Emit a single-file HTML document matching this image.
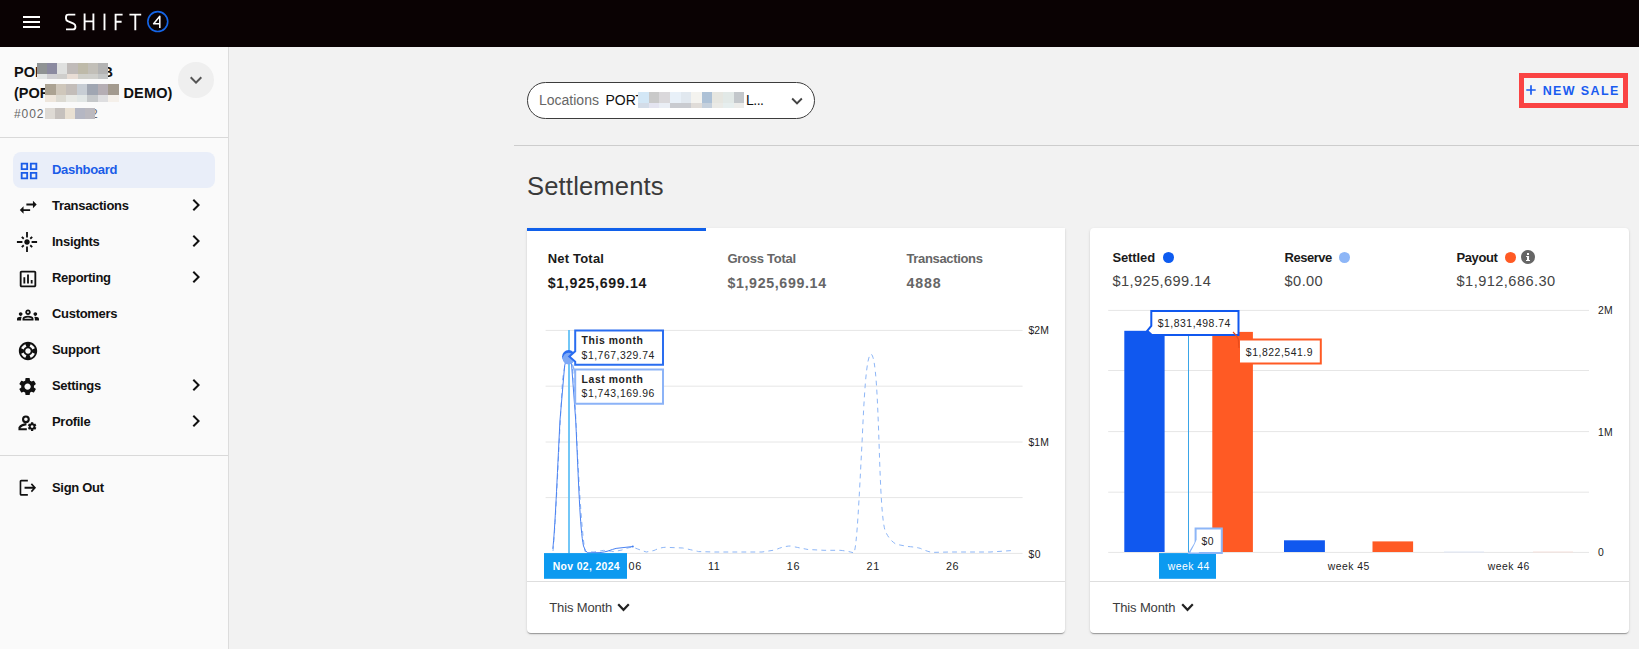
<!DOCTYPE html>
<html>
<head>
<meta charset="utf-8">
<title>Shift4 Dashboard</title>
<style>
*{box-sizing:border-box;margin:0;padding:0}
html,body{width:1639px;height:649px;overflow:hidden;background:#f2f2f2;font-family:"Liberation Sans",sans-serif;color:#1a1a1a}
.abs{position:absolute}
#top{position:absolute;left:0;top:0;width:1639px;height:47px;background:#0a0203}
#side{position:absolute;left:0;top:47px;width:229px;height:602px;background:#fafafa;border-right:1px solid #dcdcdc}
.t{position:absolute;white-space:nowrap;line-height:1}
.nav{position:absolute;left:52px;font-weight:bold;font-size:13px;letter-spacing:-0.3px;color:#111;white-space:nowrap;line-height:1}
.hr{position:absolute;height:1px;background:#d9d9d9}
.card{position:absolute;background:#fff;border-radius:4px;box-shadow:0 2px 1px -1px rgba(0,0,0,.2),0 1px 1px 0 rgba(0,0,0,.14),0 1px 3px 0 rgba(0,0,0,.12)}
svg{position:absolute;overflow:visible}
.px{position:absolute}
</style>
</head>
<body>
<!-- TOP BAR -->
<div id="top">
  <div class="abs" style="left:23px;top:16px;width:17px;height:2px;background:#fff"></div>
  <div class="abs" style="left:23px;top:21px;width:17px;height:2px;background:#fff"></div>
  <div class="abs" style="left:23px;top:26px;width:17px;height:2px;background:#fff"></div>
  <svg id="logo" style="left:0;top:0" width="200" height="47" viewBox="0 0 200 47" fill="none" stroke="#fff" stroke-width="1.9">
    <path d="M75.3 14.6 H68.5 Q66 14.6 66 17 V18.6 Q66 20.4 67.8 21.2 L73.6 23.6 Q75.4 24.4 75.4 26.2 V27 Q75.4 29.4 73 29.4 H66"/>
    <path d="M84.6 13.6 V30.2 M93.4 13.6 V30.2 M84.6 21.4 H93.4"/>
    <path d="M104.5 13.6 V30.2"/>
    <path d="M115.6 30.2 V14.6 H122.6 M115.6 21.8 H121.6"/>
    <path d="M129.4 14.6 H141.2 M135.3 14.6 V30.2"/>
    <circle cx="157.800" cy="21.600" r="9.950" stroke="#1565e6" stroke-width="1.600"/>
    <path d="M159.8 28 V16.2 L153.6 23.7 H159.8" stroke-width="1.5" stroke-linejoin="round"/>
  </svg>
</div>

<!-- SIDEBAR -->
<div id="side">
  <!-- account -->
  <div class="t" style="left:14px;top:18px;font-size:14.5px;font-weight:bold;color:#111">POR</div>
  <div class="t" style="left:102.500px;top:18px;font-size:14.5px;font-weight:bold;color:#111">B</div>
  <div class="t" style="left:14px;top:39px;font-size:14.5px;font-weight:bold;color:#111">(POR</div>
  <div class="t" style="left:123.500px;top:39px;font-size:14.5px;font-weight:bold;color:#111;letter-spacing:0.150px">DEMO)</div>
  <div class="t" style="left:14px;top:61px;font-size:12px;color:#666;letter-spacing:0.900px">#002</div>
  <div class="t" style="left:91px;top:61px;font-size:12px;color:#666">2</div>
  <!-- pixelation blocks -->
  <div id="pix1"><div class="px" style="left:37.00px;top:16px;width:10.44px;height:11px;background:#8f9394"></div><div class="px" style="left:37.00px;top:27px;width:10.44px;height:5px;background:#e2e5e5"></div><div class="px" style="left:47.14px;top:16px;width:10.44px;height:11px;background:#8b8aa0"></div><div class="px" style="left:47.14px;top:27px;width:10.44px;height:5px;background:#d0cfd2"></div><div class="px" style="left:57.29px;top:16px;width:10.44px;height:11px;background:#dfe0df"></div><div class="px" style="left:57.29px;top:27px;width:10.44px;height:5px;background:#cfcecc"></div><div class="px" style="left:67.43px;top:16px;width:10.44px;height:11px;background:#c0bbb9"></div><div class="px" style="left:67.43px;top:27px;width:10.44px;height:5px;background:#e8ddd5"></div><div class="px" style="left:77.57px;top:16px;width:10.44px;height:11px;background:#bebaa9"></div><div class="px" style="left:77.57px;top:27px;width:10.44px;height:5px;background:#cfcfc9"></div><div class="px" style="left:87.71px;top:16px;width:10.44px;height:11px;background:#c2bfb8"></div><div class="px" style="left:87.71px;top:27px;width:10.44px;height:5px;background:#cfcfcb"></div><div class="px" style="left:97.86px;top:16px;width:10.44px;height:11px;background:#b3b3b3"></div><div class="px" style="left:97.86px;top:27px;width:10.44px;height:5px;background:#c3c5c5"></div><div class="px" style="left:45.00px;top:37px;width:10.87px;height:11px;background:#aca393"></div><div class="px" style="left:45.00px;top:48px;width:10.87px;height:6.600000000000001px;background:#eee6dc"></div><div class="px" style="left:55.57px;top:37px;width:10.87px;height:11px;background:#cfc7bb"></div><div class="px" style="left:55.57px;top:48px;width:10.87px;height:6.600000000000001px;background:#dcdad2"></div><div class="px" style="left:66.14px;top:37px;width:10.87px;height:11px;background:#c3bdb9"></div><div class="px" style="left:66.14px;top:48px;width:10.87px;height:6.600000000000001px;background:#e8e9e5"></div><div class="px" style="left:76.71px;top:37px;width:10.87px;height:11px;background:#c7cdd4"></div><div class="px" style="left:76.71px;top:48px;width:10.87px;height:6.600000000000001px;background:#e1e6e5"></div><div class="px" style="left:87.29px;top:37px;width:10.87px;height:11px;background:#a0a6b2"></div><div class="px" style="left:87.29px;top:48px;width:10.87px;height:6.600000000000001px;background:#c5c8ca"></div><div class="px" style="left:97.86px;top:37px;width:10.87px;height:11px;background:#b5aeb4"></div><div class="px" style="left:97.86px;top:48px;width:10.87px;height:6.600000000000001px;background:#dedee0"></div><div class="px" style="left:108.43px;top:37px;width:10.87px;height:11px;background:#a39a8e"></div><div class="px" style="left:108.43px;top:48px;width:10.87px;height:6.600000000000001px;background:#f5f0ea"></div><div class="px" style="left:45.00px;top:61px;width:10.30px;height:11px;background:#dedad4"></div><div class="px" style="left:55.00px;top:61px;width:10.30px;height:11px;background:#c6c1bd"></div><div class="px" style="left:65.00px;top:61px;width:10.30px;height:11px;background:#e9e0d2"></div><div class="px" style="left:75.00px;top:61px;width:10.30px;height:11px;background:#b5b7c3"></div><div class="px" style="left:85.00px;top:61px;width:10.30px;height:11px;background:#bbb9bf"></div></div>
  <div class="abs" style="left:178px;top:15px;width:36px;height:36px;border-radius:50%;background:#efefef"></div>
  <svg style="left:184px;top:20.500px" width="24" height="24" viewBox="0 0 24 24"><path fill="#555" d="M16.59 8.59L12 13.17 7.41 8.59 6 10l6 6 6-6z"/></svg>
  <div class="hr" style="left:0;top:90px;width:228px"></div>
  <!-- nav -->
  <div class="abs" style="left:13px;top:105px;width:202px;height:36px;border-radius:8px;background:#e9eef9"></div>
  <svg style="left:17.6px;top:113px" width="22" height="22" viewBox="0 0 24 24"><path fill="#1a5ce8" d="M3 3v8h8V3H3zm6 6H5V5h4v4zm-6 4v8h8v-8H3zm6 6H5v-4h4v4zm4-16v8h8V3h-8zm6 6h-4V5h4v4zm-6 4v8h8v-8h-8zm6 6h-4v-4h4v4z"/></svg>
  <div class="nav" style="top:116px;color:#1a5ce8">Dashboard</div>

  <svg style="left:16.6px;top:148.600px" width="22.5" height="22.5" viewBox="0 0 24 24"><path fill="#111" d="M6.99 11L3 15l3.99 4v-3H14v-2H6.99v-3zM21 9l-3.99-4v3H10v2h7.01v3L21 9z"/></svg>
  <div class="nav" style="top:152px">Transactions</div>
  <svg class="chev" style="left:184px;top:146px" width="24" height="24" viewBox="0 0 24 24"><path fill="#111" d="M10 6L8.59 7.41 13.17 12l-4.58 4.59L10 18l6-6z"/></svg>

  <svg style="left:16px;top:184px" width="22" height="22" viewBox="0 0 24 24"><path fill="#111" d="M7 11H1v2h6v-2zm2.17-3.24L7.05 5.64 5.64 7.05l2.12 2.12 1.41-1.41zM13 1h-2v6h2V1zm5.36 6.050l-1.41-1.41-2.12 2.12 1.41 1.41 2.12-2.12zM17 11v2h6v-2h-6zm-5-2c-1.66 0-3 1.34-3 3s1.34 3 3 3 3-1.34 3-3-1.34-3-3-3zm2.83 7.24l2.12 2.12 1.41-1.41-2.12-2.12-1.41 1.41zm-9.19.71l1.41 1.41 2.12-2.120-1.41-1.41-2.12 2.12zM11 23h2v-6h-2v6z"/></svg>
  <div class="nav" style="top:188px">Insights</div>
  <svg class="chev" style="left:184px;top:182px" width="24" height="24" viewBox="0 0 24 24"><path fill="#111" d="M10 6L8.59 7.41 13.17 12l-4.58 4.59L10 18l6-6z"/></svg>

  <svg style="left:17px;top:221px" width="22" height="22" viewBox="0 0 24 24"><path fill="#111" d="M9 17H7v-7h2v7zm4 0h-2V7h2v10zm4 0h-2v-4h2v4zm2 2H5V5h14v14zm0-16H5c-1.1 0-2 .9-2 2v14c0 1.1.9 2 2 2h14c1.1 0 2-.9 2-2V5c0-1.1-.9-2-2-2z"/></svg>
  <div class="nav" style="top:224px">Reporting</div>
  <svg class="chev" style="left:184px;top:218px" width="24" height="24" viewBox="0 0 24 24"><path fill="#111" d="M10 6L8.59 7.41 13.17 12l-4.580 4.59L10 18l6-6z"/></svg>

  <svg style="left:17px;top:257px" width="22" height="22" viewBox="0 0 24 24"><path fill="#111" d="M4 13c1.1 0 2-.9 2-2s-.9-2-2-2-2 .9-2 2 .9 2 2 2zm1.13 1.1c-.37-.06-.74-.1-1.13-.1-.99 0-1.93.21-2.78.58C.48 14.9 0 15.62 0 16.43V18h4.5v-1.61c0-.83.23-1.61.63-2.29zM20 13c1.1 0 2-.9 2-2s-.9-2-2-2-2 .9-2 2 .9 2 2 2zm4 3.43c0-.81-.48-1.53-1.22-1.85-.85-.37-1.79-.58-2.78-.58-.39 0-.76.04-1.13.1.4.68.63 1.46.63 2.29V18H24v-1.57zm-7.76-2.78c-1.17-.52-2.61-.9-4.24-.9-1.63 0-3.07.39-4.24.9C6.68 14.13 6 15.21 6 16.39V18h12v-1.61c0-1.18-.68-2.26-1.76-2.74zM8.070 16c.09-.23.13-.39.91-.69.97-.38 1.99-.56 3.02-.56s2.050.18 3.020.56c.77.3.81.46.91.69H8.070zM12 8c.55 0 1 .45 1 1s-.45 1-1 1-1-.45-1-1 .45-1 1-1m0-2c-1.66 0-3 1.34-3 3s1.340 3 3 3 3-1.34 3-3-1.340-3-3-3z"/></svg>
  <div class="nav" style="top:260px">Customers</div>

  <svg style="left:17px;top:292.700px" width="22" height="22" viewBox="0 0 24 24"><path fill="#111" d="M12 2C6.48 2 2 6.48 2 12s4.48 10 10 10 10-4.48 10-10S17.52 2 12 2zm7.46 7.12l-2.78 1.15c-.51-1.36-1.58-2.44-2.95-2.94l1.15-2.78c2.1.8 3.77 2.47 4.58 4.57zM12 15c-1.66 0-3-1.34-3-3s1.34-3 3-3 3 1.34 3 3-1.34 3-3 3zM9.13 4.54l1.170 2.78c-1.38.5-2.47 1.59-2.98 2.97L4.54 9.13c.81-2.11 2.48-3.78 4.59-4.59zM4.54 14.87l2.78-1.15c.51 1.38 1.59 2.46 2.97 2.96l-1.17 2.78c-2.1-.81-3.77-2.48-4.58-4.59zm10.34 4.59l-1.15-2.78c1.37-.51 2.45-1.59 2.95-2.97l2.78 1.17c-.81 2.1-2.48 3.77-4.58 4.58z"/></svg>
  <div class="nav" style="top:296px">Support</div>

  <svg style="left:17.400px;top:329.300px" width="21.200" height="21.200" viewBox="0 0 24 24"><path fill="#111" d="M19.14 12.94c.04-.3.06-.61.06-.94 0-.32-.02-.64-.07-.94l2.030-1.58c.18-.14.23-.41.12-.61l-1.92-3.32c-.12-.22-.37-.29-.59-.22l-2.39.96c-.5-.38-1.03-.7-1.62-.94l-.36-2.54c-.04-.24-.24-.41-.48-.41h-3.84c-.24 0-.43.17-.47.41l-.36 2.54c-.59.24-1.13.57-1.62.94l-2.39-.96c-.22-.08-.47 0-.59.22L2.74 8.87c-.12.21-.08.47.12.61l2.030 1.58c-.05.3-.09.63-.09.94s.02.64.07.94l-2.03 1.58c-.18.14-.23.41-.12.61l1.92 3.32c.12.22.37.29.59.22l2.39-.96c.5.38 1.03.7 1.62.94l.36 2.54c.05.24.24.41.48.41h3.84c.24 0 .44-.17.47-.41l.36-2.54c.59-.24 1.13-.56 1.62-.94l2.39.96c.22.08.47 0 .59-.22l1.92-3.32c.12-.22.07-.47-.12-.61l-2.010-1.58zM12 15.6c-1.98 0-3.6-1.62-3.6-3.6s1.62-3.6 3.6-3.6 3.6 1.620 3.6 3.6-1.62 3.6-3.6 3.6z"/></svg>
  <div class="nav" style="top:332px">Settings</div>
  <svg class="chev" style="left:184px;top:326px" width="24" height="24" viewBox="0 0 24 24"><path fill="#111" d="M10 6L8.59 7.41 13.17 12l-4.58 4.59L10 18l6-6z"/></svg>

  <svg id="prof" style="left:0;top:0" width="60" height="420" viewBox="0 0 60 420" fill="none" stroke="#111" stroke-width="2.100"><circle cx="25.900" cy="372.300" r="2.850"/><path d="M26.400 377.100 Q21.600 377.500 19.500 380.500 V382.300 H26.800" stroke-linejoin="miter"/><circle cx="32.100" cy="379.600" r="2.350" stroke-width="1.900"/><path d="M32.100 375.300 V377 M32.100 382.200 V383.900 M28.400 377.450 L29.850 378.300 M34.350 380.900 L35.800 381.750 M28.400 381.750 L29.850 380.900 M34.350 378.300 L35.800 377.450" stroke-width="2.300"/></svg>
  <div class="nav" style="top:368px">Profile</div>
  <svg class="chev" style="left:184px;top:362px" width="24" height="24" viewBox="0 0 24 24"><path fill="#111" d="M10 6L8.59 7.41 13.17 12l-4.58 4.59L10 18l6-6z"/></svg>

  <div class="hr" style="left:0;top:408px;width:228px"></div>
  <svg style="left:18px;top:430px" width="19.7" height="21.5" preserveAspectRatio="none" viewBox="0 0 24 24"><path fill="#111" d="M17 7l-1.41 1.41L18.17 11H8v2h10.17l-2.58 2.58L17 17l5-5zM4 5h8V3H4c-1.1 0-2 .9-2 2v14c0 1.100.9 2 2 2h8v-2H4V5z"/></svg>
  <div class="nav" style="top:434px">Sign Out</div>
</div>

<!-- MAIN -->
<div id="main">
<div class="abs" style="left:527px;top:82px;width:288px;height:37px;border:1px solid #3c3c3c;border-radius:19px;background:#fff"></div>
<div class="t" style="left:539px;top:93.44px;font-size:14px;color:#666;">Locations</div>
<div class="t" style="left:605.5px;top:93.44px;font-size:14px;color:#111;">PORT</div>
<div class="t" style="left:746px;top:93.44px;font-size:14px;color:#111;letter-spacing:-0.5px;">L...</div>
<div class="px" style="left:638.20px;top:92px;width:10.89px;height:11px;background:#d3e7f6"></div><div class="px" style="left:638.20px;top:103px;width:10.89px;height:5px;background:#d3dce8"></div><div class="px" style="left:648.79px;top:92px;width:10.89px;height:11px;background:#c9c9c9"></div><div class="px" style="left:648.79px;top:103px;width:10.89px;height:5px;background:#e4e4f0"></div><div class="px" style="left:659.38px;top:92px;width:10.89px;height:11px;background:#dad8db"></div><div class="px" style="left:659.38px;top:103px;width:10.89px;height:5px;background:#eaeef5"></div><div class="px" style="left:669.97px;top:92px;width:10.89px;height:11px;background:#e8f0f8"></div><div class="px" style="left:669.97px;top:103px;width:10.89px;height:5px;background:#c9cbd0"></div><div class="px" style="left:680.56px;top:92px;width:10.89px;height:11px;background:#e1e8ef"></div><div class="px" style="left:680.56px;top:103px;width:10.89px;height:5px;background:#c9cbd0"></div><div class="px" style="left:691.15px;top:92px;width:10.89px;height:11px;background:#f4f3ef"></div><div class="px" style="left:691.15px;top:103px;width:10.89px;height:5px;background:#e0dcd8"></div><div class="px" style="left:701.74px;top:92px;width:10.89px;height:11px;background:#adc1d6"></div><div class="px" style="left:701.74px;top:103px;width:10.89px;height:5px;background:#c5d0dc"></div><div class="px" style="left:712.33px;top:92px;width:10.89px;height:11px;background:#e6e6e0"></div><div class="px" style="left:712.33px;top:103px;width:10.89px;height:5px;background:#eaeae6"></div><div class="px" style="left:722.92px;top:92px;width:10.89px;height:11px;background:#e2e9e7"></div><div class="px" style="left:722.92px;top:103px;width:10.89px;height:5px;background:#e6eeee"></div><div class="px" style="left:733.51px;top:92px;width:10.89px;height:11px;background:#c3c7cb"></div><div class="px" style="left:733.51px;top:103px;width:10.89px;height:5px;background:#ececea"></div>
<svg style="left:786px;top:90.200px" width="22" height="22" viewBox="0 0 24 24"><path fill="#444" d="M16.59 8.59L12 13.17 7.41 8.59 6 10l6 6 6-6z"/></svg>
<div class="abs" style="left:1519px;top:73px;width:109px;height:35px;border:5px solid #fa4343;background:#f5f5f5"></div>
<svg style="left:1526.300px;top:84.700px" width="10" height="10" viewBox="0 0 10 10"><path d="M5 0.300V9.700M0.300 5H9.700" stroke="#1a5cf0" stroke-width="1.700" fill="none"/></svg>
<div class="t" style="left:1542.7px;top:84.97px;font-size:12.5px;color:#1a5cf0;font-weight:bold;letter-spacing:1.38px;">NEW SALE</div>
<div class="hr" style="left:514px;top:145px;width:1125px;background:#cdcdcd"></div>
<div class="t" style="left:527px;top:173.86px;font-size:25.6px;color:#3a3a3a;letter-spacing:0.15px;">Settlements</div>
<div class="card" style="left:527px;top:228px;width:538px;height:404.500px;border-radius:0 0 4px 4px"></div>
<div class="abs" style="left:527px;top:228px;width:179px;height:3px;background:#1060ea"></div>
<div class="t" style="left:547.7px;top:252.23px;font-size:13px;color:#1a1a1a;font-weight:bold;letter-spacing:0.2px;">Net Total</div>
<div class="t" style="left:547.7px;top:276.04px;font-size:14.2px;color:#1a1a1a;font-weight:bold;letter-spacing:0.66px;">$1,925,699.14</div>
<div class="t" style="left:727.4px;top:252.23px;font-size:13px;color:#666;font-weight:bold;letter-spacing:-0.25px;">Gross Total</div>
<div class="t" style="left:727.4px;top:276.04px;font-size:14.2px;color:#666;font-weight:bold;letter-spacing:0.66px;">$1,925,699.14</div>
<div class="t" style="left:906.4px;top:252.23px;font-size:13px;color:#666;font-weight:bold;letter-spacing:-0.33px;">Transactions</div>
<div class="t" style="left:906.4px;top:276.04px;font-size:14.2px;color:#666;font-weight:bold;letter-spacing:0.9px;">4888</div>
<div class="hr" style="left:527px;top:581px;width:538px;background:#dedede"></div>
<div class="t" style="left:549.3px;top:601.03px;font-size:13px;color:#3c3c3c;letter-spacing:-0.15px;">This Month</div>
<svg style="left:616.800px;top:602.500px" width="13" height="9" viewBox="0 0 13 9"><path d="M1.200 1.300L6.500 6.800L11.800 1.300" stroke="#222" stroke-width="2.200" fill="none"/></svg>
<div class="card" style="left:1090px;top:228px;width:539px;height:404.500px"></div>
<div class="t" style="left:1112.4px;top:250.63px;font-size:13px;color:#1a1a1a;font-weight:bold;letter-spacing:-0.1px;">Settled</div>
<div class="abs" style="left:1162.500px;top:251.900px;width:11px;height:11px;border-radius:50%;background:#0d5bf0"></div>
<div class="t" style="left:1112.4px;top:274.25px;font-size:14.6px;color:#444;letter-spacing:0.42px;">$1,925,699.14</div>
<div class="t" style="left:1284.6px;top:250.63px;font-size:13px;color:#1a1a1a;font-weight:bold;letter-spacing:-0.5px;">Reserve</div>
<div class="abs" style="left:1338.800px;top:251.900px;width:11px;height:11px;border-radius:50%;background:#8db6f7"></div>
<div class="t" style="left:1284.6px;top:274.25px;font-size:14.6px;color:#444;letter-spacing:0.4px;">$0.00</div>
<div class="t" style="left:1456.5px;top:250.63px;font-size:13px;color:#1a1a1a;font-weight:bold;letter-spacing:-0.4px;">Payout</div>
<div class="abs" style="left:1505px;top:251.900px;width:11px;height:11px;border-radius:50%;background:#ff5a24"></div>
<svg style="left:1521.100px;top:249.800px" width="14" height="14" viewBox="0 0 24 24"><circle cx="12" cy="12" r="12" fill="#666"/><path fill="#fff" d="M10.300 5.200h3.400v3.200h-3.400zM8.800 10.200h5v6.800h1.600v2h-6.800v-2h1.700v-4.800H8.800z"/></svg>
<div class="t" style="left:1456.5px;top:274.25px;font-size:14.6px;color:#444;letter-spacing:0.45px;">$1,912,686.30</div>
<div class="hr" style="left:1090px;top:581px;width:539px;background:#dedede"></div>
<div class="t" style="left:1112.5px;top:601.03px;font-size:13px;color:#3c3c3c;letter-spacing:-0.15px;">This Month</div>
<svg style="left:1180.600px;top:602.500px" width="13" height="9" viewBox="0 0 13 9"><path d="M1.200 1.300L6.500 6.800L11.800 1.300" stroke="#222" stroke-width="2.200" fill="none"/></svg>
<svg id="charts" style="left:0;top:0" width="1639" height="649" viewBox="0 0 1639 649" fill="none"><path d="M545.600 330.4H1022.600" stroke="#e6e6e6" stroke-width="1"/><path d="M545.600 386.2H1022.600" stroke="#e6e6e6" stroke-width="1"/><path d="M545.600 442H1022.600" stroke="#e6e6e6" stroke-width="1"/><path d="M545.600 497.6H1022.600" stroke="#e6e6e6" stroke-width="1"/><path d="M545.600 553.4H1022.600" stroke="#e6e6e6" stroke-width="1"/><path d="M553 551 C556 520 559 440 562.500 380 Q566 356 568 358 Q571 356 574 380 C577 440 580 520 585 551.500 L594 552 Q599 551 603.500 550.400 Q610 551 614 551.600 L622 550 Q628 547.500 632.800 547.100 Q640 550 646.300 552 L654 550.500 Q660 547.500 665.300 547.300 L682.800 548 Q692 550 698.600 551.600 L714 552 H762 L775 550 Q784 546 790.600 546 Q800 548 808 549.500 L824 550.300 H840 Q848 551 854 553 C857 545 859 500 862.100 441.400 C864 400 866 356 871 354 C876 356 877.500 400 879 441.400 C880.500 490 882 520 885 530.300 Q889 540 896.200 544.300 L908 546.500 Q915 547 920.200 548.300 Q927 551.500 932.200 552.400 L950 552 H990 L1014.400 550.400" stroke="#8db6f7" stroke-width="1" stroke-dasharray="4.800 4.200"/><path d="M552.800 548.800 C555 530 557 480 560 420 L564.600 366 Q568 350 571.600 365 L575.700 420 C578.500 480 580 530 583.500 546 Q585.500 552 587.600 552.800 L600 552.600 Q605 552 608 551 Q613 549.200 616.100 548.400 L632.800 546.500" stroke="#4a82f2" stroke-width="1"/><circle cx="632.800" cy="546.500" r="1" fill="#3f7df0"/><path d="M569 330V553.400" stroke="#63c1f7" stroke-width="1.800"/><circle cx="568.600" cy="356.500" r="6.500" fill="#2a6df0"/><circle cx="568.600" cy="358.700" r="5.900" fill="#7ea9f6"/><path d="M575.200 369.500H663V403.700H575.200Z" fill="#fff" stroke="#8cb3f7" stroke-width="2"/><path d="M575.200 373 L572.300 364.500" stroke="#8cb3f7" stroke-width="1.500"/><path d="M575.200 330.500H663V364.700H575.200V361.600L569.300 356.400L575.200 351.300Z" fill="#fff" stroke="#2a6df0" stroke-width="2" stroke-linejoin="miter"/><rect x="544" y="553.100" width="83" height="25.700" fill="#0c9af0"/><path d="M1108.200 310.4H1589" stroke="#e6e6e6" stroke-width="1"/><path d="M1108.200 370.5H1589" stroke="#e6e6e6" stroke-width="1"/><path d="M1108.200 431.6H1589" stroke="#e6e6e6" stroke-width="1"/><path d="M1108.200 492.2H1589" stroke="#e6e6e6" stroke-width="1"/><path d="M1108.200 552.4H1589" stroke="#e6e6e6" stroke-width="1"/><rect x="1124.300" y="330.800" width="40.300" height="221.200" fill="#1058ef"/><rect x="1212.300" y="331.900" width="40.600" height="220.100" fill="#ff5a24"/><rect x="1284" y="540.300" width="40.900" height="11.700" fill="#1058ef"/><rect x="1372.500" y="541.400" width="40.600" height="10.600" fill="#ff5a24"/><path d="M1444 552H1484" stroke="#dfe6f5" stroke-width="1"/><path d="M1533 552H1573" stroke="#f5e1dc" stroke-width="1"/><path d="M1188.500 336V552.400" stroke="#3aa5e8" stroke-width="1"/><rect x="1159" y="553.100" width="57" height="25.700" fill="#0c9af0"/><path d="M1195.600 528.500H1221.800V553H1195.600Z" fill="#fff" stroke="#8db6f7" stroke-width="2"/><path d="M1195.600 542.500 L1189 553.200 L1200 553Z" fill="#fff" stroke="#8db6f7" stroke-width="1.500"/><path d="M1196.600 540 L1190.800 552 L1202 552 L1202 540Z" fill="#fff"/><path d="M1151.300 311H1238.500V335H1151.800L1147.200 330.800L1151.300 325.800Z" fill="#fff" stroke="#1058ef" stroke-width="2"/><path d="M1239 339.400H1320.800V363.400H1239Z" fill="#fff" stroke="#ff5a24" stroke-width="2"/><path d="M1233 332 Q1236.500 335 1238.300 339 L1239 348" fill="none" stroke="#e64c1c" stroke-width="1.200"/></svg>
<div class="t" style="left:1028.4px;top:326.30px;font-size:10.4px;color:#1c1c1c;letter-spacing:0.2px;">$2M</div>
<div class="t" style="left:1028.4px;top:438.30px;font-size:10.4px;color:#1c1c1c;letter-spacing:0.2px;">$1M</div>
<div class="t" style="left:1028.4px;top:549.50px;font-size:10.4px;color:#1c1c1c;letter-spacing:0.5px;">$0</div>
<div class="t" style="left:635.2px;top:560.81px;font-size:10.8px;color:#1c1c1c;letter-spacing:0.7px;transform:translateX(-50%);">06</div>
<div class="t" style="left:714.2px;top:560.81px;font-size:10.8px;color:#1c1c1c;letter-spacing:0.7px;transform:translateX(-50%);">11</div>
<div class="t" style="left:793.4px;top:560.81px;font-size:10.8px;color:#1c1c1c;letter-spacing:0.7px;transform:translateX(-50%);">16</div>
<div class="t" style="left:873.2px;top:560.81px;font-size:10.8px;color:#1c1c1c;letter-spacing:0.7px;transform:translateX(-50%);">21</div>
<div class="t" style="left:952.6px;top:560.81px;font-size:10.8px;color:#1c1c1c;letter-spacing:0.7px;transform:translateX(-50%);">26</div>
<div class="t" style="left:552.7px;top:561.50px;font-size:10.4px;color:#fff;font-weight:bold;letter-spacing:0.36px;">Nov 02, 2024</div>
<div class="t" style="left:581.6px;top:336.10px;font-size:10.4px;color:#222;font-weight:bold;letter-spacing:0.58px;">This month</div>
<div class="t" style="left:581.6px;top:351.20px;font-size:10.4px;color:#222;letter-spacing:0.52px;">$1,767,329.74</div>
<div class="t" style="left:581.6px;top:374.90px;font-size:10.4px;color:#222;font-weight:bold;letter-spacing:0.58px;">Last month</div>
<div class="t" style="left:581.6px;top:389.10px;font-size:10.4px;color:#222;letter-spacing:0.52px;">$1,743,169.96</div>
<div class="t" style="left:1598px;top:306.10px;font-size:10.4px;color:#1c1c1c;letter-spacing:0.2px;">2M</div>
<div class="t" style="left:1598px;top:428.10px;font-size:10.4px;color:#1c1c1c;letter-spacing:0.2px;">1M</div>
<div class="t" style="left:1598px;top:548.30px;font-size:10.4px;color:#1c1c1c;letter-spacing:0.2px;">0</div>
<div class="t" style="left:1188.7px;top:562.20px;font-size:10.4px;color:#fff;letter-spacing:0.45px;transform:translateX(-50%);">week 44</div>
<div class="t" style="left:1348.8px;top:562.20px;font-size:10.4px;color:#1c1c1c;letter-spacing:0.45px;transform:translateX(-50%);">week 45</div>
<div class="t" style="left:1508.7px;top:562.20px;font-size:10.4px;color:#1c1c1c;letter-spacing:0.45px;transform:translateX(-50%);">week 46</div>
<div class="t" style="left:1157.8px;top:319.40px;font-size:10.4px;color:#222;letter-spacing:0.51px;">$1,831,498.74</div>
<div class="t" style="left:1245.8px;top:348.30px;font-size:10.4px;color:#222;letter-spacing:0.55px;">$1,822,541.9</div>
<div class="t" style="left:1207.8px;top:537.20px;font-size:10.4px;color:#222;letter-spacing:0.4px;transform:translateX(-50%);">$0</div>
</div>
</body>
</html>
